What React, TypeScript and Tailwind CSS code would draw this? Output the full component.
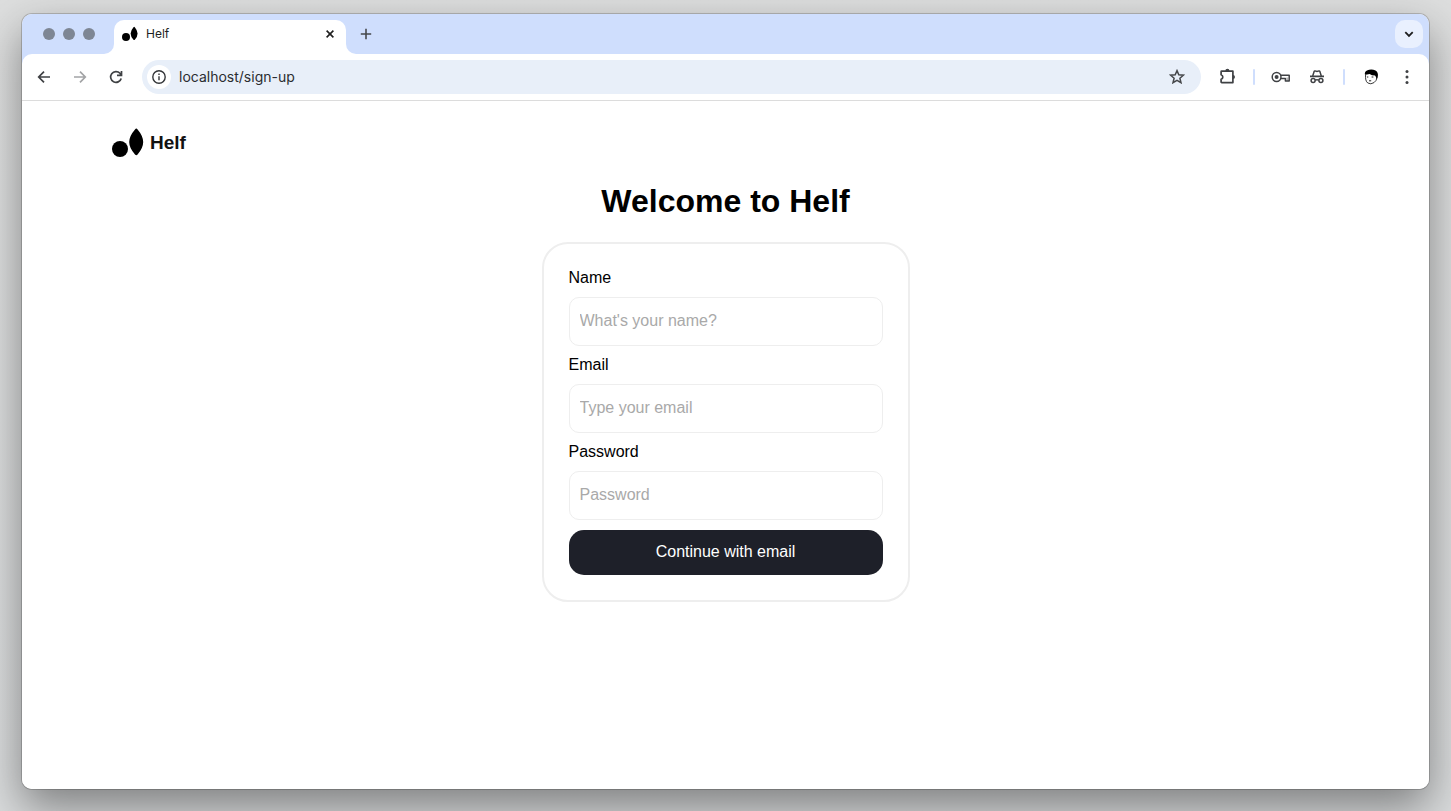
import { useId, type ReactNode } from "react";

function HelfMark({ className }: { className: string }) {
  return (
    <svg viewBox="0 0 32 30" className={className} aria-hidden="true">
      <circle cx="8" cy="21" r="8" />
      <path d="M24.3 .4Q25 .4 25.6 1.4Q31.2 8 31.2 14Q31.2 20 25.6 26.4Q24.3 28 23 26.4Q17.2 20 17.2 14Q17.2 8 23 1.4Q23.7 .4 24.3 .4Z" />
    </svg>
  );
}

function Icon({ children, className = "size-5" }: { children: ReactNode; className?: string }) {
  return (
    <svg
      viewBox="0 0 20 20"
      className={className}
      fill="none"
      stroke="currentColor"
      strokeWidth="1.7"
      aria-hidden="true"
    >
      {children}
    </svg>
  );
}

function ToolButton({ label, children, disabled }: { label: string; children: ReactNode; disabled?: boolean }) {
  return (
    <button
      type="button"
      aria-label={label}
      disabled={disabled}
      className="flex size-9 shrink-0 items-center justify-center rounded-full text-[#3f4144] disabled:text-[#a3a4a6]"
    >
      {children}
    </button>
  );
}

function TabStrip() {
  return (
    <div className="flex h-10 items-end bg-[#cfdefd] pr-1.5 pl-[21px]">
      <div className="flex h-10 items-center gap-2">
        <span className="size-3 rounded-full bg-[#7e8694]" />
        <span className="size-3 rounded-full bg-[#7e8694]" />
        <span className="size-3 rounded-full bg-[#7e8694]" />
      </div>
      <div className="ml-[9px] size-2.5 bg-white">
        <div className="size-full rounded-br-[10px] bg-[#cfdefd]" />
      </div>
      <div className="flex h-[34px] w-[232px] items-center rounded-t-[10px] bg-white pr-2 pb-1.5 pl-2 text-[#1f1f1f]">
        <HelfMark className="h-4 w-4" />
        <span className="ml-2 grow text-xs">Helf</span>
        <button type="button" aria-label="Close tab" className="flex size-4 items-center justify-center">
          <svg viewBox="0 0 16 16" className="size-4" stroke="currentColor" strokeWidth="1.6" aria-hidden="true">
            <path d="M4.600 4.600l6.800 6.800M11.400 4.600l-6.800 6.800" />
          </svg>
        </button>
      </div>
      <div className="size-2.5 bg-white">
        <div className="size-full rounded-bl-[10px] bg-[#cfdefd]" />
      </div>
      <button type="button" aria-label="New tab" className="flex h-10 w-5 items-center justify-center text-[#46484b]">
        <svg viewBox="0 0 20 20" className="size-5" stroke="currentColor" strokeWidth="1.6" aria-hidden="true">
          <path d="M10 4.8v10.4M4.8 10h10.4" />
        </svg>
      </button>
      <button
        type="button"
        aria-label="Search tabs"
        className="mb-1.5 ml-auto flex size-7 items-center justify-center rounded-[10px] bg-[#e9f0fe] text-[#1f1f1f]"
      >
        <svg viewBox="0 0 20 20" className="size-5" fill="none" stroke="currentColor" strokeWidth="1.8" aria-hidden="true">
          <path d="M6.3 8.2L10 11.9l3.7-3.7" />
        </svg>
      </button>
    </div>
  );
}

function Toolbar() {
  return (
    <div className="bg-[#cfdefd]">
      <div className="flex h-[47px] items-center rounded-t-[10px] border-b border-[#dcdcdc] bg-white px-1">
        <ToolButton label="Back">
          <Icon>
            <path d="M16 10H5M10 4.600L4.700 10l5.300 5.400" />
          </Icon>
        </ToolButton>
        <ToolButton label="Forward" disabled>
          <Icon>
            <path d="M4 10h11M10 4.600l5.300 5.400-5.300 5.400" />
          </Icon>
        </ToolButton>
        <ToolButton label="Reload">
          <Icon>
            <path d="M15.200 11.400A5.400 5.400 0 1 1 14 6.300L15.300 7.600M15.500 4v4.300h-4.500" />
          </Icon>
        </ToolButton>
        <div className="ml-2 flex h-[34px] grow items-center rounded-full bg-[#e8eff9] pr-3.5 pl-[5px]">
          <button
            type="button"
            aria-label="View site information"
            className="flex size-6 shrink-0 items-center justify-center rounded-full bg-white text-[#333538]"
          >
            <svg viewBox="0 0 16 16" className="size-4" fill="none" stroke="currentColor" strokeWidth="1.4" aria-hidden="true">
              <circle cx="8" cy="8" r="6.2" />
              <path d="M8 7.2v4M8 4.6v1.5" />
            </svg>
          </button>
          <input
            aria-label="Address"
            defaultValue="localhost/sign-up"
            className="ml-2 h-6 min-w-0 grow bg-transparent pb-0.5 text-sm text-[#2b2d30] outline-none"
          />
          <button type="button" aria-label="Bookmark this tab" className="text-[#46484b]">
            <Icon>
              <path
                strokeWidth="1.5"
                d="M10 3.6l1.8 4.2 4.6.4-3.5 3 1.1 4.5-4-2.4-4 2.4 1.1-4.5-3.5-3 4.6-.4z"
              />
            </Icon>
          </button>
        </div>
        <div className="ml-2 flex items-center">
          <ToolButton label="Extensions">
            <Icon>
              <path d="M4.700 4.200h11.200v11.400H4.700a.6.6 0 0 1-.6-.6v-2.700a2.400 2.400 0 0 0 0-4.600V4.800a.6.6 0 0 1 .6-.6z" strokeLinejoin="round" />
              <path d="M8.300 4.200a2.100 2.400 0 0 1 4.200 0zM15.900 7.900a2.100 2.100 0 0 1 0 4.200z" fill="currentColor" stroke="none" />
            </Icon>
          </ToolButton>
          <span className="mx-2 h-4 w-0.5 rounded-full bg-[#cfdefd]" />
          <ToolButton label="Passwords">
            <Icon>
              <circle cx="5.600" cy="10" r="4.400" strokeWidth="1.500" />
              <circle cx="5.600" cy="10" r="2" fill="currentColor" stroke="none" />
              <path d="M9.700 8.200h8.500v5.800h-3.800v-2.500H9.800" strokeWidth="1.500" strokeLinejoin="round" />
              <path d="M16.300 10.600v3.200" strokeWidth="1.800" opacity=".4" />
            </Icon>
          </ToolButton>
          <ToolButton label="Incognito">
            <Icon>
              <path d="M3 9.300h14" strokeWidth="1.700" />
              <path d="M5.700 9l1.500-4.700q.2-.5.7-.4l2.100.6 2.100-.6q.5-.1.700.4L14.300 9" strokeWidth="1.500" />
              <circle cx="6.100" cy="13.500" r="2" strokeWidth="1.500" />
              <circle cx="13.900" cy="13.500" r="2" strokeWidth="1.500" />
              <path d="M8.100 13.200q1.900-.9 3.800 0" strokeWidth="1.400" />
            </Icon>
          </ToolButton>
          <span className="mx-2 h-4 w-0.5 rounded-full bg-[#cfdefd]" />
          <ToolButton label="Profile">
            <svg viewBox="0 0 20 20" className="size-5" aria-hidden="true">
              <path d="M4.600 7.600q-.6 6.400 2.200 8.400 3 1.800 6.200-.4 2.800-2 3-5.200" fill="#fff" stroke="#222" strokeWidth=".9" />
              <path
                d="M4 7.800Q3.200 4.600 6 3.400Q10.500 1.600 14.500 3.500Q17.600 5.400 16.800 9.600Q16.600 11.400 15.600 12Q15.200 9.700 14 8.400Q10.600 8.400 8.600 6.900Q6 7.400 4 7.800Z"
                fill="#000"
              />
              <path d="M5.900 10h1.400M10.600 10h1.800M8 13.800h2.200" stroke="#222" strokeWidth="1" />
            </svg>
          </ToolButton>
          <ToolButton label="Browser menu">
            <Icon>
              <g fill="currentColor" stroke="none">
                <circle cx="10" cy="4.600" r="1.500" />
                <circle cx="10" cy="10" r="1.500" />
                <circle cx="10" cy="15.400" r="1.500" />
              </g>
            </Icon>
          </ToolButton>
        </div>
      </div>
    </div>
  );
}

function Field({ label, type, placeholder }: { label: string; type: string; placeholder: string }) {
  const id = useId();
  return (
    <div className="flex flex-col gap-2.5">
      <label htmlFor={id} className="leading-[18px]">
        {label}
      </label>
      <input
        id={id}
        type={type}
        placeholder={placeholder}
        className="h-[49px] w-full rounded-[10px] border border-[#eeeeee] px-2.5 pb-0.5 placeholder:text-[#a9a9a9]"
      />
    </div>
  );
}

function SignUpPage() {
  return (
    <div className="grow bg-white px-[90px] pt-[26px] font-['Liberation_Sans',Arial,sans-serif] text-base text-black">
      <header>
        <a href="/" className="inline-flex items-center gap-1.5 align-top">
          <HelfMark className="h-[30px] w-8" />
          <span className="text-[19px] leading-8 font-bold text-[#111111]">Helf</span>
        </a>
      </header>
      <main className="mt-[22px] flex flex-col items-center">
        <h1 className="text-[32px] leading-10 font-bold">Welcome to Helf</h1>
        <form
          onSubmit={(event) => event.preventDefault()}
          className="mt-[21px] flex w-full max-w-[368px] flex-col gap-2.5 rounded-[26px] border-2 border-[#eeeeee] p-[25px]"
        >
          <Field label="Name" type="text" placeholder="What's your name?" />
          <Field label="Email" type="email" placeholder="Type your email" />
          <Field label="Password" type="password" placeholder="Password" />
          <button type="submit" className="h-[45px] rounded-[15px] bg-[#1e2029] pb-0.5 text-white">
            Continue with email
          </button>
        </form>
      </main>
    </div>
  );
}

export default function App() {
  return (
    <div className="flex min-h-screen flex-col bg-linear-to-b from-[#dddede] to-[#d9dbdc] px-[22px] pt-3.5 pb-[22px] font-[Inter,Roboto,sans-serif]">
      <div className="flex grow flex-col overflow-hidden rounded-[10px] bg-white shadow-[0_0_0_1px_rgba(0,0,0,0.18),0_18px_44px_rgba(0,0,0,0.42)]">
        <TabStrip />
        <Toolbar />
        <SignUpPage />
      </div>
    </div>
  );
}
